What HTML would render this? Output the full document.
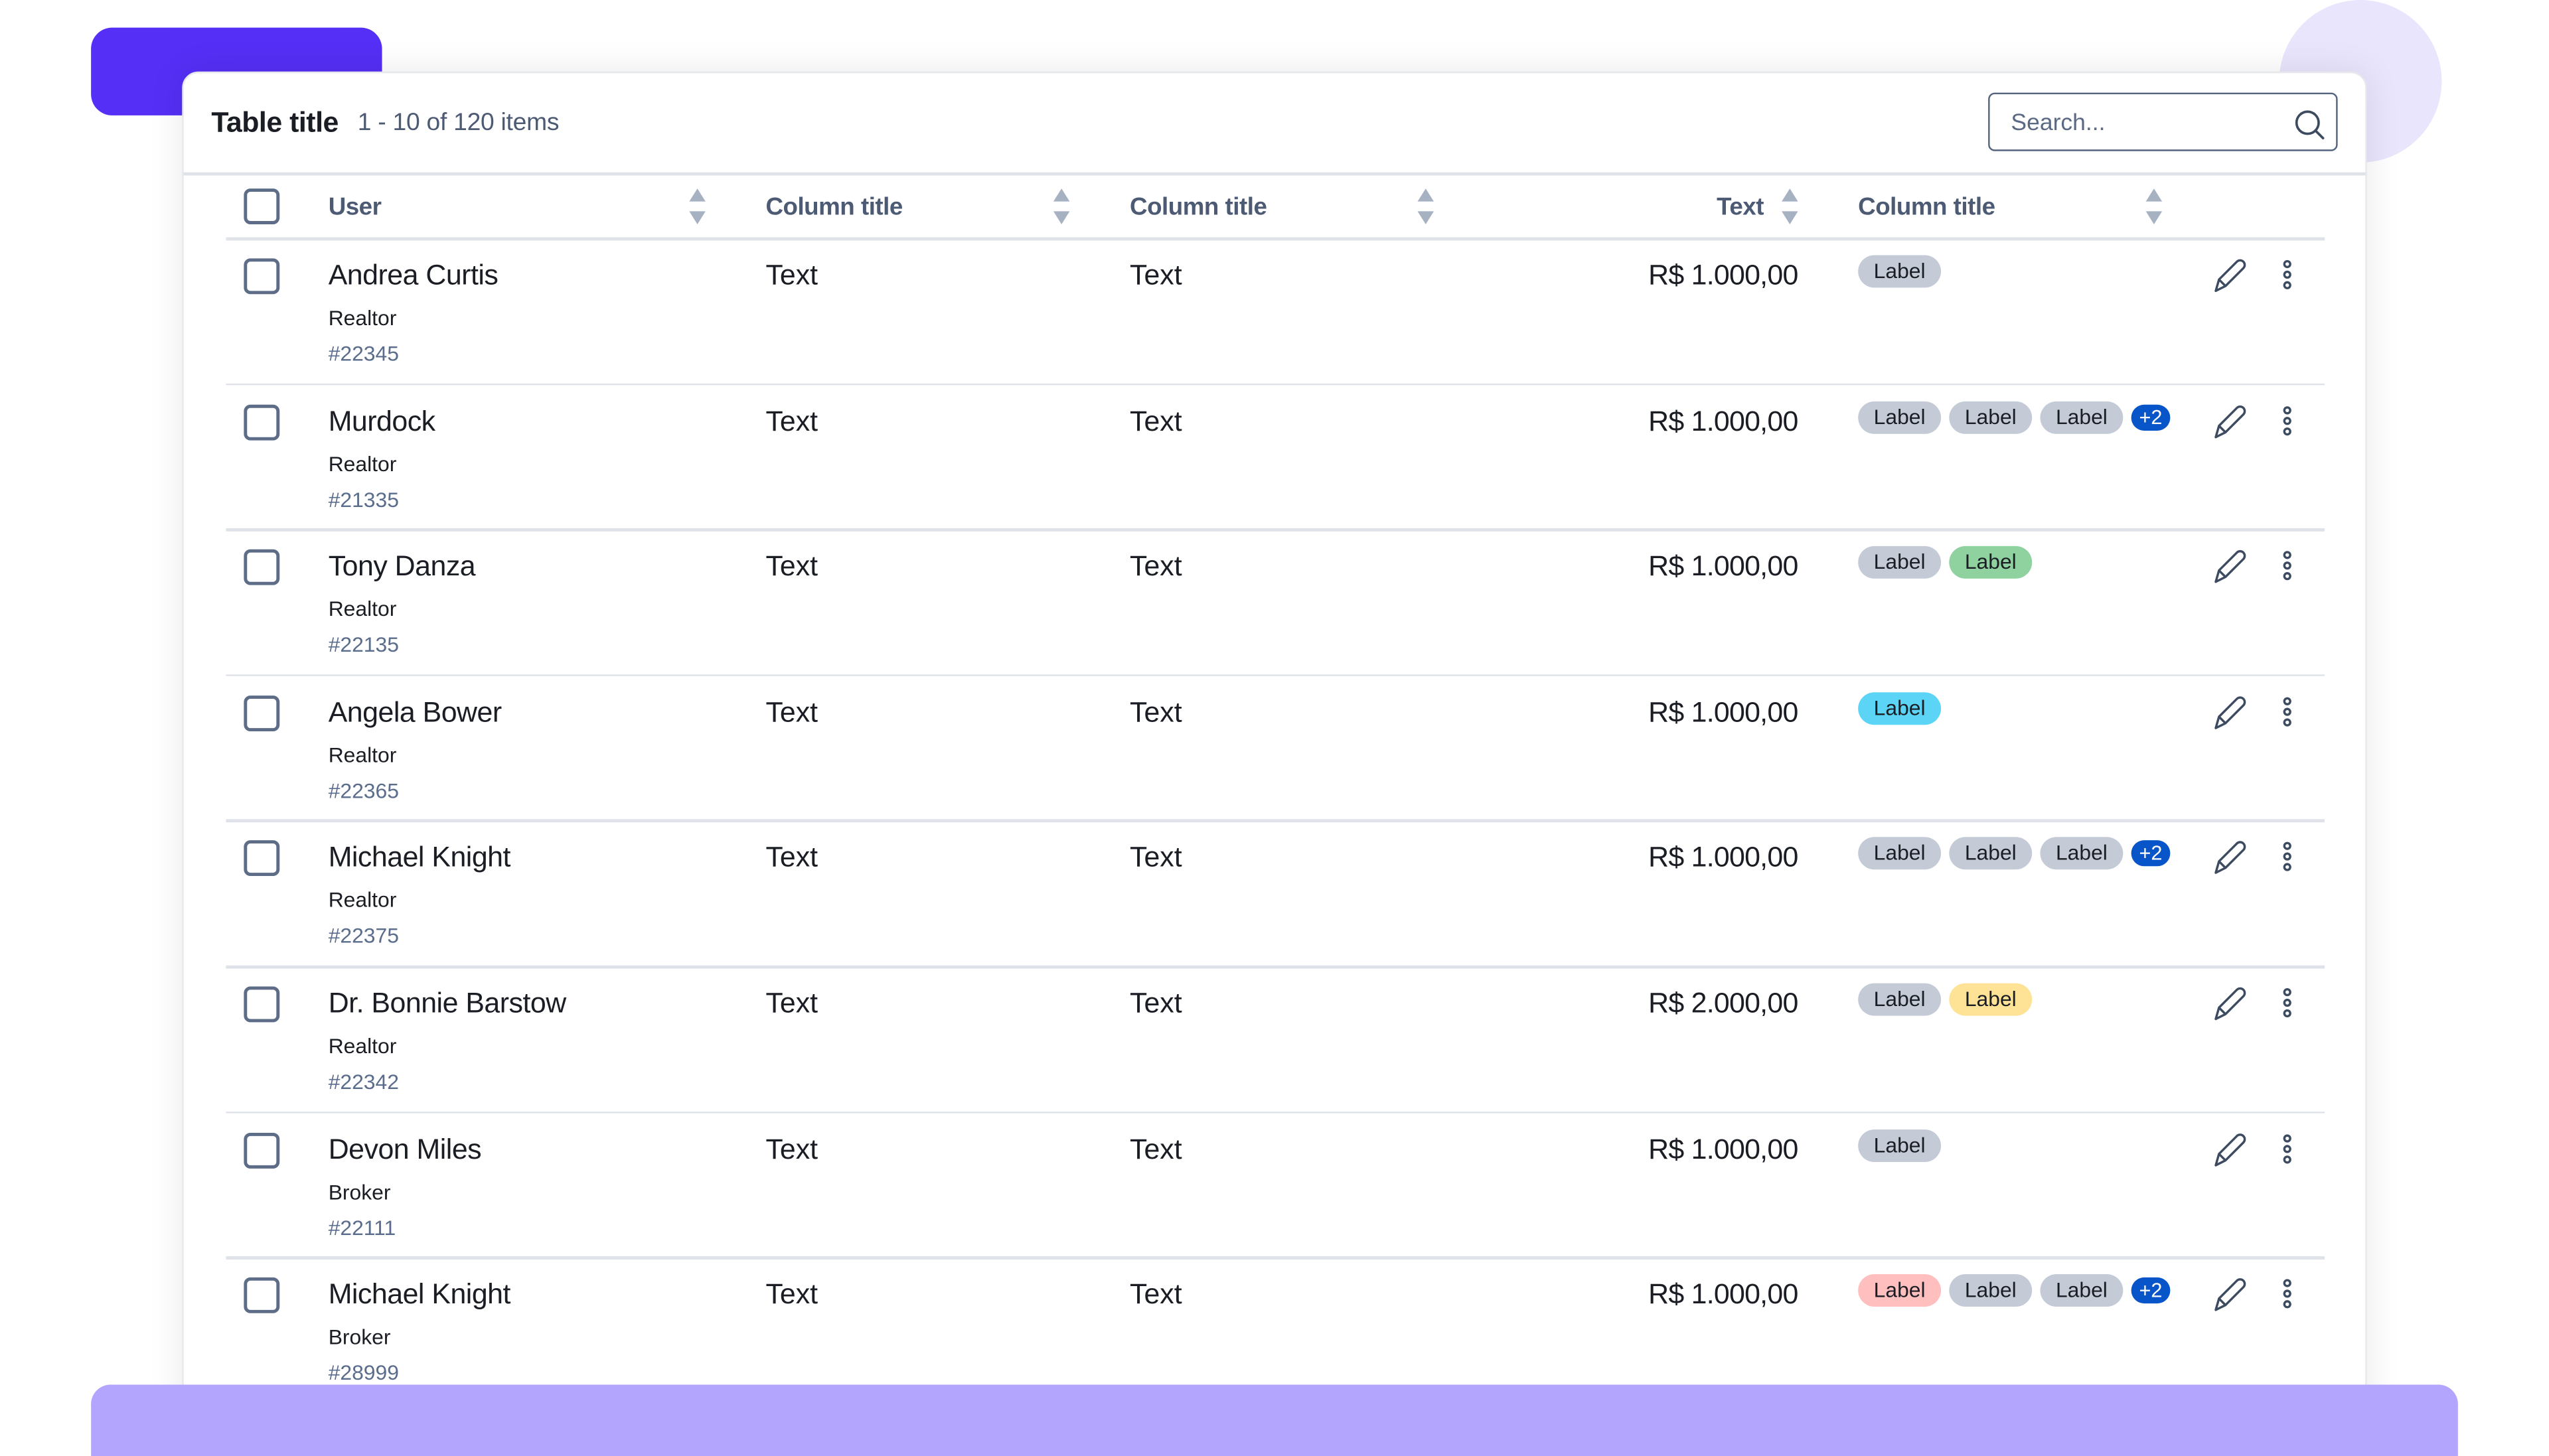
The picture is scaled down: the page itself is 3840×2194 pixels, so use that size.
<!DOCTYPE html>
<html><head><meta charset="utf-8"><style>
*{margin:0;padding:0;box-sizing:border-box}
html,body{width:3840px;height:2194px;overflow:hidden;background:#fff}
#w{position:absolute;left:0;top:0;width:1568px;height:896px;transform:scale(2.44898);transform-origin:0 0;font-family:"Liberation Sans",Arial,sans-serif;background:#fff;overflow:hidden}
.abs{position:absolute}
#blk{left:56px;top:17px;width:179px;height:54px;background:#552ff5;border-radius:13px}
#circ{left:1402px;top:0px;width:100px;height:100px;border-radius:50%;background:#e9e5fc}
#card{left:112px;top:44px;width:1344px;height:860px;background:#fff;border-radius:10px;box-shadow:0 0 22px rgba(0,0,0,.09);border:1px solid #e6e8ec}
.t1{left:130px;top:65px;font-size:17.5px;font-weight:bold;color:#1a1d23;letter-spacing:-.2px}
.t2{left:220px;top:67px;font-size:15.2px;color:#4c5a73;letter-spacing:-.1px}
#search{left:1223px;top:57px;width:215px;height:36px;border:1.3px solid #55657f;border-radius:4px}
#search span{position:absolute;left:13px;top:10px;font-size:14.5px;color:#5b6a84}
.hl{left:113px;top:106px;width:1342px;height:1.5px;background:#dfe3e9}
.cb{position:absolute;width:22px;height:22px;border:2px solid #5d6d88;border-radius:4px}
.hd{position:absolute;top:119px;font-size:15px;font-weight:bold;color:#4c5a73;letter-spacing:-.2px}
.sort{position:absolute;width:12px;height:24px}
.row{position:absolute;left:0;width:1568px;height:90px}
.row .ln{position:absolute;left:139px;top:0;width:1291px;height:1.5px;background:#dfe3e9}
.nm{position:absolute;left:202px;top:13px;font-size:17.5px;color:#1a1d23;letter-spacing:-.2px}
.rl{position:absolute;left:202px;top:42px;font-size:13px;color:#1a1d23}
.id{position:absolute;left:202px;top:64px;font-size:13px;color:#5b6d8c}
.tx{position:absolute;top:13px;font-size:17.5px;color:#1a1d23}
.mo{position:absolute;right:462px;top:13px;font-size:17.5px;color:#1a1d23;letter-spacing:-.3px}
.lb{position:absolute;top:11px;height:20px;width:51px;border-radius:10px;background:#c4cbd7;font-size:13px;color:#1a1d23;text-align:center;line-height:20px}
.pl{position:absolute;top:13px;left:1311px;width:24px;height:16px;border-radius:8px;background:#0755c9;color:#fff;font-size:12.5px;text-align:center;line-height:16px}
.ic{position:absolute;top:0;left:0}
</style></head><body><div id="w">
<div id="blk" class="abs"></div>
<div id="circ" class="abs"></div>
<div id="card" class="abs"></div>
<div class="abs t1">Table title</div>
<div class="abs t2">1 - 10 of 120 items</div>
<div id="search" class="abs"><span>Search...</span>
<svg class="abs" style="left:186px;top:8px" width="22" height="22" viewBox="0 0 22 22"><circle cx="9.5" cy="9.5" r="6.8" fill="none" stroke="#3d4b61" stroke-width="1.5"/><line x1="14.5" y1="14.5" x2="19" y2="19" stroke="#3d4b61" stroke-width="1.5" stroke-linecap="round"/></svg></div>
<div class="abs hl"></div>
<div class="cb" style="left:150px;top:116px"></div>
<div class="hd" style="left:202px">User</div>
<div class="hd" style="left:471px">Column title</div>
<div class="hd" style="left:695px">Column title</div>
<div class="hd" style="left:1056px">Text</div>
<div class="hd" style="left:1143px">Column title</div>
<svg class="sort" style="left:423px;top:115px" viewBox="0 0 12 24"><path d="M6 1L11 9H1Z M6 23L11 15H1Z" fill="#a6b1c2"/></svg>
<svg class="sort" style="left:647px;top:115px" viewBox="0 0 12 24"><path d="M6 1L11 9H1Z M6 23L11 15H1Z" fill="#a6b1c2"/></svg>
<svg class="sort" style="left:871px;top:115px" viewBox="0 0 12 24"><path d="M6 1L11 9H1Z M6 23L11 15H1Z" fill="#a6b1c2"/></svg>
<svg class="sort" style="left:1095px;top:115px" viewBox="0 0 12 24"><path d="M6 1L11 9H1Z M6 23L11 15H1Z" fill="#a6b1c2"/></svg>
<svg class="sort" style="left:1319px;top:115px" viewBox="0 0 12 24"><path d="M6 1L11 9H1Z M6 23L11 15H1Z" fill="#a6b1c2"/></svg>

<div class="row" style="top:146px"><div class="ln"></div><div class="cb" style="left:150px;top:13px"></div><div class="nm">Andrea Curtis</div><div class="rl">Realtor</div><div class="id">#22345</div><div class="tx" style="left:471px">Text</div><div class="tx" style="left:695px">Text</div><div class="mo">R$ 1.000,00</div>
<div class="lb" style="left:1143px">Label</div>
<svg class="ic" width="1568" height="50"><g fill="none" stroke="#3d4b61" stroke-width="1.4" stroke-linejoin="round"><path d="M1363 33L1365 26L1376 15A2 2 0 0 1 1380 19L1369 30Z M1365 26L1369 30"/><circle cx="1407" cy="16.5" r="1.8"/><circle cx="1407" cy="23" r="1.8"/><circle cx="1407" cy="29.5" r="1.8"/></g></svg></div>

<div class="row" style="top:235.6px"><div class="ln"></div><div class="cb" style="left:150px;top:13px"></div><div class="nm">Murdock</div><div class="rl">Realtor</div><div class="id">#21335</div><div class="tx" style="left:471px">Text</div><div class="tx" style="left:695px">Text</div><div class="mo">R$ 1.000,00</div>
<div class="lb" style="left:1143px">Label</div><div class="lb" style="left:1199px">Label</div><div class="lb" style="left:1255px">Label</div><div class="pl">+2</div>
<svg class="ic" width="1568" height="50"><g fill="none" stroke="#3d4b61" stroke-width="1.4" stroke-linejoin="round"><path d="M1363 33L1365 26L1376 15A2 2 0 0 1 1380 19L1369 30Z M1365 26L1369 30"/><circle cx="1407" cy="16.5" r="1.8"/><circle cx="1407" cy="23" r="1.8"/><circle cx="1407" cy="29.5" r="1.8"/></g></svg></div>

<div class="row" style="top:325.2px"><div class="ln"></div><div class="cb" style="left:150px;top:13px"></div><div class="nm">Tony Danza</div><div class="rl">Realtor</div><div class="id">#22135</div><div class="tx" style="left:471px">Text</div><div class="tx" style="left:695px">Text</div><div class="mo">R$ 1.000,00</div>
<div class="lb" style="left:1143px">Label</div><div class="lb" style="left:1199px;background:#8fd29f">Label</div>
<svg class="ic" width="1568" height="50"><g fill="none" stroke="#3d4b61" stroke-width="1.4" stroke-linejoin="round"><path d="M1363 33L1365 26L1376 15A2 2 0 0 1 1380 19L1369 30Z M1365 26L1369 30"/><circle cx="1407" cy="16.5" r="1.8"/><circle cx="1407" cy="23" r="1.8"/><circle cx="1407" cy="29.5" r="1.8"/></g></svg></div>

<div class="row" style="top:414.8px"><div class="ln"></div><div class="cb" style="left:150px;top:13px"></div><div class="nm">Angela Bower</div><div class="rl">Realtor</div><div class="id">#22365</div><div class="tx" style="left:471px">Text</div><div class="tx" style="left:695px">Text</div><div class="mo">R$ 1.000,00</div>
<div class="lb" style="left:1143px;background:#5cd4f6">Label</div>
<svg class="ic" width="1568" height="50"><g fill="none" stroke="#3d4b61" stroke-width="1.4" stroke-linejoin="round"><path d="M1363 33L1365 26L1376 15A2 2 0 0 1 1380 19L1369 30Z M1365 26L1369 30"/><circle cx="1407" cy="16.5" r="1.8"/><circle cx="1407" cy="23" r="1.8"/><circle cx="1407" cy="29.5" r="1.8"/></g></svg></div>

<div class="row" style="top:504.4px"><div class="ln"></div><div class="cb" style="left:150px;top:13px"></div><div class="nm">Michael Knight</div><div class="rl">Realtor</div><div class="id">#22375</div><div class="tx" style="left:471px">Text</div><div class="tx" style="left:695px">Text</div><div class="mo">R$ 1.000,00</div>
<div class="lb" style="left:1143px">Label</div><div class="lb" style="left:1199px">Label</div><div class="lb" style="left:1255px">Label</div><div class="pl">+2</div>
<svg class="ic" width="1568" height="50"><g fill="none" stroke="#3d4b61" stroke-width="1.4" stroke-linejoin="round"><path d="M1363 33L1365 26L1376 15A2 2 0 0 1 1380 19L1369 30Z M1365 26L1369 30"/><circle cx="1407" cy="16.5" r="1.8"/><circle cx="1407" cy="23" r="1.8"/><circle cx="1407" cy="29.5" r="1.8"/></g></svg></div>

<div class="row" style="top:594px"><div class="ln"></div><div class="cb" style="left:150px;top:13px"></div><div class="nm">Dr. Bonnie Barstow</div><div class="rl">Realtor</div><div class="id">#22342</div><div class="tx" style="left:471px">Text</div><div class="tx" style="left:695px">Text</div><div class="mo">R$ 2.000,00</div>
<div class="lb" style="left:1143px">Label</div><div class="lb" style="left:1199px;background:#fee397">Label</div>
<svg class="ic" width="1568" height="50"><g fill="none" stroke="#3d4b61" stroke-width="1.4" stroke-linejoin="round"><path d="M1363 33L1365 26L1376 15A2 2 0 0 1 1380 19L1369 30Z M1365 26L1369 30"/><circle cx="1407" cy="16.5" r="1.8"/><circle cx="1407" cy="23" r="1.8"/><circle cx="1407" cy="29.5" r="1.8"/></g></svg></div>

<div class="row" style="top:683.6px"><div class="ln"></div><div class="cb" style="left:150px;top:13px"></div><div class="nm">Devon Miles</div><div class="rl">Broker</div><div class="id">#22111</div><div class="tx" style="left:471px">Text</div><div class="tx" style="left:695px">Text</div><div class="mo">R$ 1.000,00</div>
<div class="lb" style="left:1143px">Label</div>
<svg class="ic" width="1568" height="50"><g fill="none" stroke="#3d4b61" stroke-width="1.4" stroke-linejoin="round"><path d="M1363 33L1365 26L1376 15A2 2 0 0 1 1380 19L1369 30Z M1365 26L1369 30"/><circle cx="1407" cy="16.5" r="1.8"/><circle cx="1407" cy="23" r="1.8"/><circle cx="1407" cy="29.5" r="1.8"/></g></svg></div>

<div class="row" style="top:773.2px"><div class="ln"></div><div class="cb" style="left:150px;top:13px"></div><div class="nm">Michael Knight</div><div class="rl">Broker</div><div class="id">#28999</div><div class="tx" style="left:471px">Text</div><div class="tx" style="left:695px">Text</div><div class="mo">R$ 1.000,00</div>
<div class="lb" style="left:1143px;background:#ffbfbf">Label</div><div class="lb" style="left:1199px">Label</div><div class="lb" style="left:1255px">Label</div><div class="pl">+2</div>
<svg class="ic" width="1568" height="50"><g fill="none" stroke="#3d4b61" stroke-width="1.4" stroke-linejoin="round"><path d="M1363 33L1365 26L1376 15A2 2 0 0 1 1380 19L1369 30Z M1365 26L1369 30"/><circle cx="1407" cy="16.5" r="1.8"/><circle cx="1407" cy="23" r="1.8"/><circle cx="1407" cy="29.5" r="1.8"/></g></svg></div>

<div class="abs" style="left:56px;top:852px;width:1456px;height:60px;background:#b3a4fd;border-radius:12px"></div>
</div></body></html>
